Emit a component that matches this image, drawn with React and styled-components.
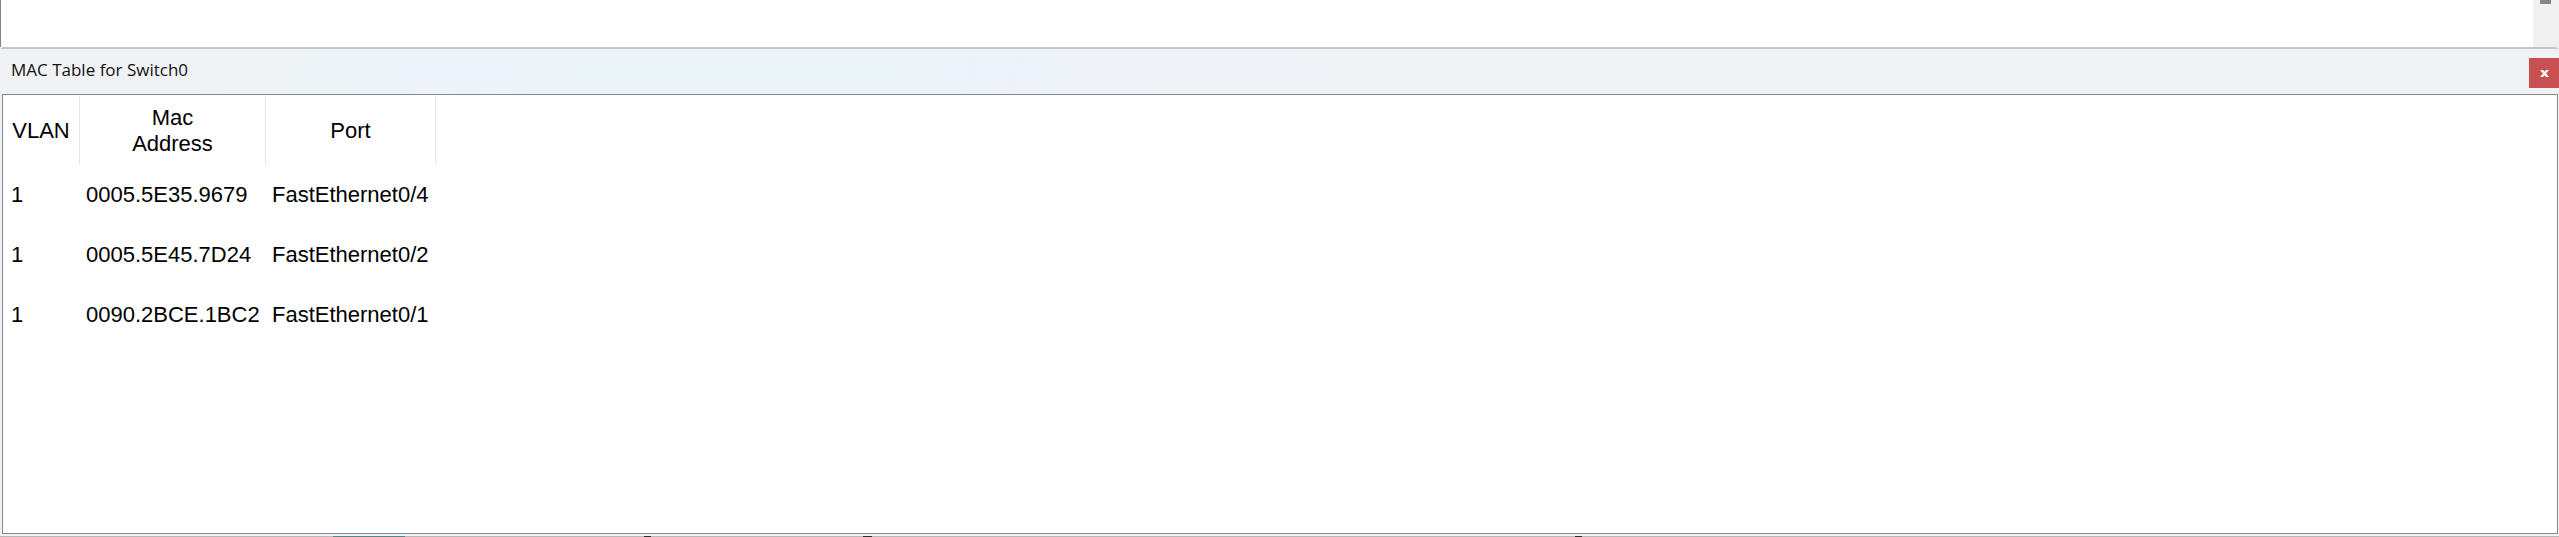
import React from 'react';
import styled, { createGlobalStyle } from 'styled-components';

const GlobalStyle = createGlobalStyle`
  * { box-sizing: border-box; }
  body { margin: 0; background: #fff; font-family: "Liberation Sans", Arial, sans-serif; color: #000; }
`;

const Screen = styled.div`
  display: flex;
  flex-direction: column;
  min-height: 100vh;
`;

const BackWindow = styled.div`
  display: flex;
  justify-content: flex-end;
  height: 47px;
  border-left: 1px solid #80838d;
`;

const ScrollTrack = styled.div`
  width: 26px;
  padding-left: 7px;
  background: #f0f0f0;
`;

const ScrollThumb = styled.div`
  width: 11px;
  height: 4px;
  background: #868686;
`;

const Window = styled.section`
  flex: 1;
  display: flex;
  flex-direction: column;
  border-top: 2px solid #c6c6c6;
  border-radius: 4px 4px 0 0;
  background: #f1f2f4;
`;

const TitleBar = styled.header`
  display: flex;
  align-items: center;
  justify-content: space-between;
  height: 45px;
  padding-left: 11px;
  background: linear-gradient(100deg, #f1f2f6 0, #f1f2f6 200px, #edf3f6 320px, #eef3fc 430px, #ebf4f8 580px, #ebf4f8 880px, #edf2fb 980px, #eff2f8 1100px, #f1f2f6 1400px, #f1f2f4 100%);
`;

const Title = styled.h1`
  margin: 0;
  font: 400 17px/24px "Open Sans", "Noto Sans", sans-serif;
  padding-bottom: 4px;
  color: #111;
`;

const CloseButton = styled.button`
  display: flex;
  align-items: center;
  justify-content: center;
  width: 30px;
  height: 30px;
  margin-top: 3px;
  padding: 0;
  border: 0;
  background: #c75050;
`;

const Content = styled.main`
  flex: 1;
  margin: 0 1px 2px 2px;
  padding: 1px 0 0;
  border: 1px solid #828790;
  background: #fff;
`;

const MacTable = styled.table`
  table-layout: fixed;
  width: 433px;
  border-collapse: separate;
  border-spacing: 0;
  font-size: 22px;
  line-height: 26px;
`;

const Column = styled.col`
  width: ${(p) => p.$width}px;
`;

const HeadCell = styled.th`
  height: 68px;
  padding: 2px ${(p) => (p.$wrap ? 40 : 4)}px 0;
  border-right: 1px solid #e5e5e5;
  font-weight: 400;
  text-align: center;
`;

const Cell = styled.td`
  height: 60px;
  padding: 2px 0 0 6px;
  white-space: nowrap;

  &:first-child {
    padding-left: 8px;
  }
`;

const Desktop = styled.footer`
  display: flex;
  height: 1px;
  background: #b9b9b9;
`;

const Sliver = styled.span`
  width: ${(p) => p.$width}px;
  margin-left: ${(p) => p.$gap}px;
  background: ${(p) => p.$color};
`;

const rows = [
  ['1', '0005.5E35.9679', 'FastEthernet0/4'],
  ['1', '0005.5E45.7D24', 'FastEthernet0/2'],
  ['1', '0090.2BCE.1BC2', 'FastEthernet0/1'],
];

export default function App() {
  return (
    <Screen>
      <GlobalStyle />
      <BackWindow>
        <ScrollTrack><ScrollThumb /></ScrollTrack>
      </BackWindow>
      <Window>
        <TitleBar>
          <Title>MAC Table for Switch0</Title>
          <CloseButton type="button" aria-label="Close">
            <svg width="9" height="7" viewBox="0 0 9 7" aria-hidden="true">
              <path d="M0 0h3l1.5 1.7L6 0h3L6 3.5 9 7H6L4.500 5.300 3 7H0l3-3.500z" fill="#fff" />
            </svg>
          </CloseButton>
        </TitleBar>
        <Content>
          <MacTable>
            <colgroup>
              <Column $width={77} />
              <Column $width={186} />
              <Column $width={170} />
            </colgroup>
            <thead>
              <tr>
                <HeadCell scope="col">VLAN</HeadCell>
                <HeadCell scope="col" $wrap>Mac Address</HeadCell>
                <HeadCell scope="col">Port</HeadCell>
              </tr>
            </thead>
            <tbody>
              {rows.map((row) => (
                <tr key={row[1]}>
                  {row.map((value, i) => <Cell key={i}>{value}</Cell>)}
                </tr>
              ))}
            </tbody>
          </MacTable>
        </Content>
      </Window>
      <Desktop>
        <Sliver $gap={333} $width={72} $color="#5b8585" />
        <Sliver $gap={239} $width={7} $color="#2e2e2a" />
        <Sliver $gap={212} $width={9} $color="#2e2e2a" />
        <Sliver $gap={703} $width={7} $color="#2e2e2e" />
      </Desktop>
    </Screen>
  );
}
